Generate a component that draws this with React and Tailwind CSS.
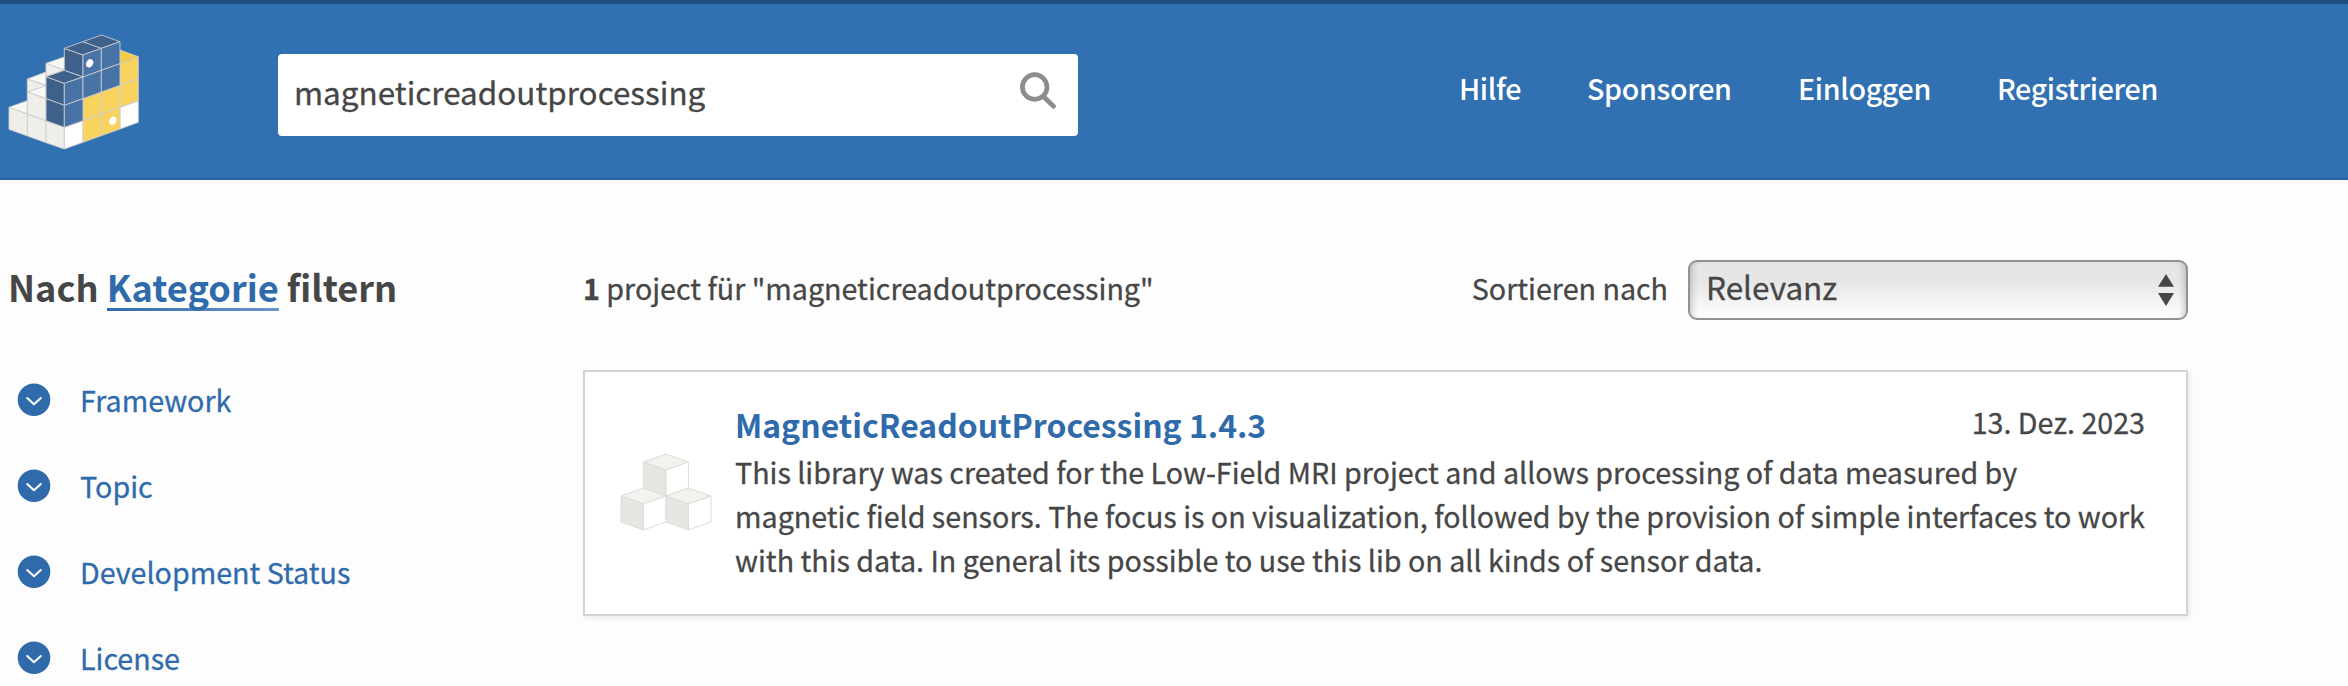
import React from "react";

const NAV = [
  { label: "Hilfe", cls: "w-[128px]" },
  { label: "Sponsoren", cls: "w-[211px]" },
  { label: "Einloggen", cls: "w-[199px]" },
  { label: "Registrieren", cls: "w-[170px]" },
];
const FILTERS = ["Framework", "Topic", "Development Status", "License"];

function Logo() {
  return (
    <svg viewBox="22 100 394 348" className="h-[116px] w-[131.33px] shrink-0" strokeWidth="2.600" strokeLinejoin="round" stroke="#cdcdcd">
      <g fill="#f8f8f5">
        <path d="M25 320L80 300V340Z" />
        <path d="M80 235L136 214V254Z" />
        <path d="M136 188L191 169V208Z" />
        <path d="M80 274L136 255V294Z" />
      </g>
      <g fill="#efeeeb">
        <path d="M25 320L80 340V406L25 386Z" />
        <path d="M80 340L136 360V426L80 406Z" />
        <path d="M136 360L191 380V445L136 426Z" />
        <path d="M80 274L136 294V360L80 340Z" />
        <path d="M80 235L136 255L80 274Z" />
        <path d="M136 188L191 208L136 228Z" />
      </g>
      <path fill="#fff" d="M191 380L247 360V425L191 445Z" />
      <path fill="#fff" d="M358 320L413 300V365L358 385Z" />
      <g fill="#f8d45f">
        <path d="M247 294L302 274V340L247 360Z" />
        <path d="M302 274L358 254V320L302 340Z" />
        <path d="M358 189L413 168V234L358 254Z" />
        <path d="M358 254L413 234V300L358 320Z" />
        <path d="M247 360L302 340V405L247 425Z" />
        <path d="M302 340L358 320V385L302 405Z" />
      </g>
      <path fill="#f6cb47" d="M358 148L413 168L358 189Z" />
      <g fill="#3e618b">
        <path d="M136 228L191 248V314L136 294Z" />
        <path d="M136 294L191 314V380L136 360Z" />
        <path d="M191 143L247 163V229L191 209Z" />
        <path d="M136 228L191 209L247 229L191 248Z" />
        <path d="M191 143L247 123L302 143L247 163Z" />
        <path d="M247 123L302 103L358 123L302 143Z" />
      </g>
      <g fill="#4773a6">
        <path d="M191 248L247 229V294L191 314Z" />
        <path d="M191 314L247 294V360L191 380Z" />
        <path d="M247 163L302 143V209L247 229Z" />
        <path d="M302 143L358 123V189L302 209Z" />
        <path d="M247 229L302 209V274L247 294Z" />
        <path d="M302 209L358 189V254L302 274Z" />
      </g>
      <ellipse cx="267" cy="188" rx="10" ry="13" transform="rotate(28 267 188)" fill="#fff" stroke="none" />
      <ellipse cx="336.500" cy="360" rx="10" ry="13" transform="rotate(28 336.500 360)" fill="#fff" stroke="none" />
    </svg>
  );
}

function Cube({ x, y }) {
  return (
    <g transform={`translate(${x} ${y})`} strokeLinejoin="round" stroke="#dcdcda" strokeWidth="1">
      <path fill="#f2f2ef" d="M0 8L22.500 0L45 8L22.500 16Z" />
      <path fill="#e7e6e3" d="M0 8L22.500 16V42L0 34Z" />
      <path fill="#fff" d="M22.500 16L45 8V34L22.500 42Z" />
    </g>
  );
}

function FilterRow({ label }) {
  return (
    <li className="flex h-[86px] items-start">
      <svg viewBox="0 0 34 34" className="mt-[6px] h-[34px] w-[34px] shrink-0">
        <circle cx="17" cy="16.700" r="16.300" fill="#2f6bab" />
        <path d="M10.200 15L17 21.300L23.800 15" fill="none" stroke="#fff" strokeWidth="2" strokeLinecap="round" strokeLinejoin="round" />
      </svg>
      <span className="mt-px ml-[29px] text-[28.65px] leading-[44px] text-[#2f6bab]">{label}</span>
    </li>
  );
}

export default function App() {
  return (
    <div className="h-[686px] w-[2348px] overflow-hidden bg-[#fdfdfd] text-[#464646] [font-family:'Noto_Sans_CJK_SC','Noto_Sans',sans-serif] whitespace-nowrap [-webkit-text-stroke:0.3px_currentColor]">
      <header className="flex h-[180px] items-start border-t-4 border-b-2 border-t-[#1f4f7c] border-b-[#2b639f] bg-[#3171b1]">
        <div className="mt-[29.500px] ml-[7.500px] w-[270.500px]"><Logo /></div>
        <div className="mt-[50px] flex h-[82px] w-[800px] justify-between rounded-[4px] bg-white pl-[16px]">
          <span className="mt-[16px] text-[31.45px] leading-[44px]">magneticreadoutprocessing</span>
          <svg viewBox="0 0 40 40" className="mt-[15px] mr-[21px] h-[40px] w-[40px]" fill="none" stroke="#8d8d8d" strokeLinecap="round">
            <circle cx="17.700" cy="18" r="12.300" strokeWidth="4.700" />
            <path d="M27 28L36.500 37.300" strokeWidth="4.700" />
          </svg>
        </div>
        <nav className="mt-[62px] ml-[381px] flex text-[28.65px] leading-[44px] font-medium tracking-[-0.36px] text-white [-webkit-text-stroke:0px]">
          {NAV.map((n) => (
            <a key={n.label} className={n.cls}>{n.label}</a>
          ))}
        </nav>
      </header>
      <main className="flex">
        <aside className="w-[583px] pl-[8px]">
          <h2 className="mt-[80px] h-[54px] text-[36.15px] leading-[52px] font-bold [-webkit-text-stroke:0px]">
            Nach{" "}
            <span className="inline-block h-[51px] bg-linear-to-r from-[#2f6bab] to-[#6a97c8] bg-[length:100%_3px] bg-bottom bg-no-repeat text-[#2f6bab]">Kategorie</span>{" "}
            filtern
          </h2>
          <ul className="mt-[63px] pl-[9px]">
            {FILTERS.map((f) => (
              <FilterRow key={f} label={f} />
            ))}
          </ul>
        </aside>
        <section className="w-[1605px]">
          <div className="mt-[80px] flex h-[60px] items-start justify-between">
            <p className="mt-[6px] text-[28.65px] leading-[44px]">
              <b>1</b> project für "magneticreadoutprocessing"
            </p>
            <div className="flex">
              <span className="mt-[6px] mr-[20px] text-[28.65px] leading-[44px]">Sortieren nach</span>
              <div className="flex h-[60px] w-[500px] justify-between rounded-[9px] border-2 border-[#929292] bg-linear-to-b from-[#e6e6e6] from-35% to-white pr-[12px] pl-[16px] shadow-[inset_7px_0_6px_-5px_rgba(0,0,0,0.2),inset_-7px_0_6px_-5px_rgba(0,0,0,0.2)]">
                <span className="text-[31.5px] leading-[48px]">Relevanz</span>
                <svg viewBox="0 0 16 32" className="mt-[12px] h-[32px] w-[16px]" fill="#464646">
                  <path d="M8 0L16 12.700H0Z" />
                  <path d="M0 19H16L8 32Z" />
                </svg>
              </div>
            </div>
          </div>
          <article className="mt-[50px] flex h-[246px] border-2 border-[#d3d3d3] bg-white shadow-[2px_2px_4px_1px_rgba(0,0,0,0.06)]">
            <svg viewBox="0 0 92 78" className="mt-[81px] ml-[35px] h-[78px] w-[92px] shrink-0">
              <Cube x={23.5} y={1} />
              <Cube x={1} y={35} />
              <Cube x={46} y={35} />
            </svg>
            <div className="ml-[23px] w-[1410px]">
              <div className="flex h-[78px] justify-between">
                <h3 className="mt-[30px] text-[31.95px] leading-[44px] font-bold text-[#2f6bab] [-webkit-text-stroke:0px]">MagneticReadoutProcessing 1.4.3</h3>
                <time className="mt-[28px] text-[28.65px] leading-[44px]">13. Dez. 2023</time>
              </div>
              <p className="text-[28.65px] leading-[44px]">
                This library was created for the Low-Field MRI project and allows processing of data measured by<br />
                magnetic field sensors. The focus is on visualization, followed by the provision of simple interfaces to work<br />
                with this data. In general its possible to use this lib on all kinds of sensor data.
              </p>
            </div>
          </article>
        </section>
      </main>
    </div>
  );
}
